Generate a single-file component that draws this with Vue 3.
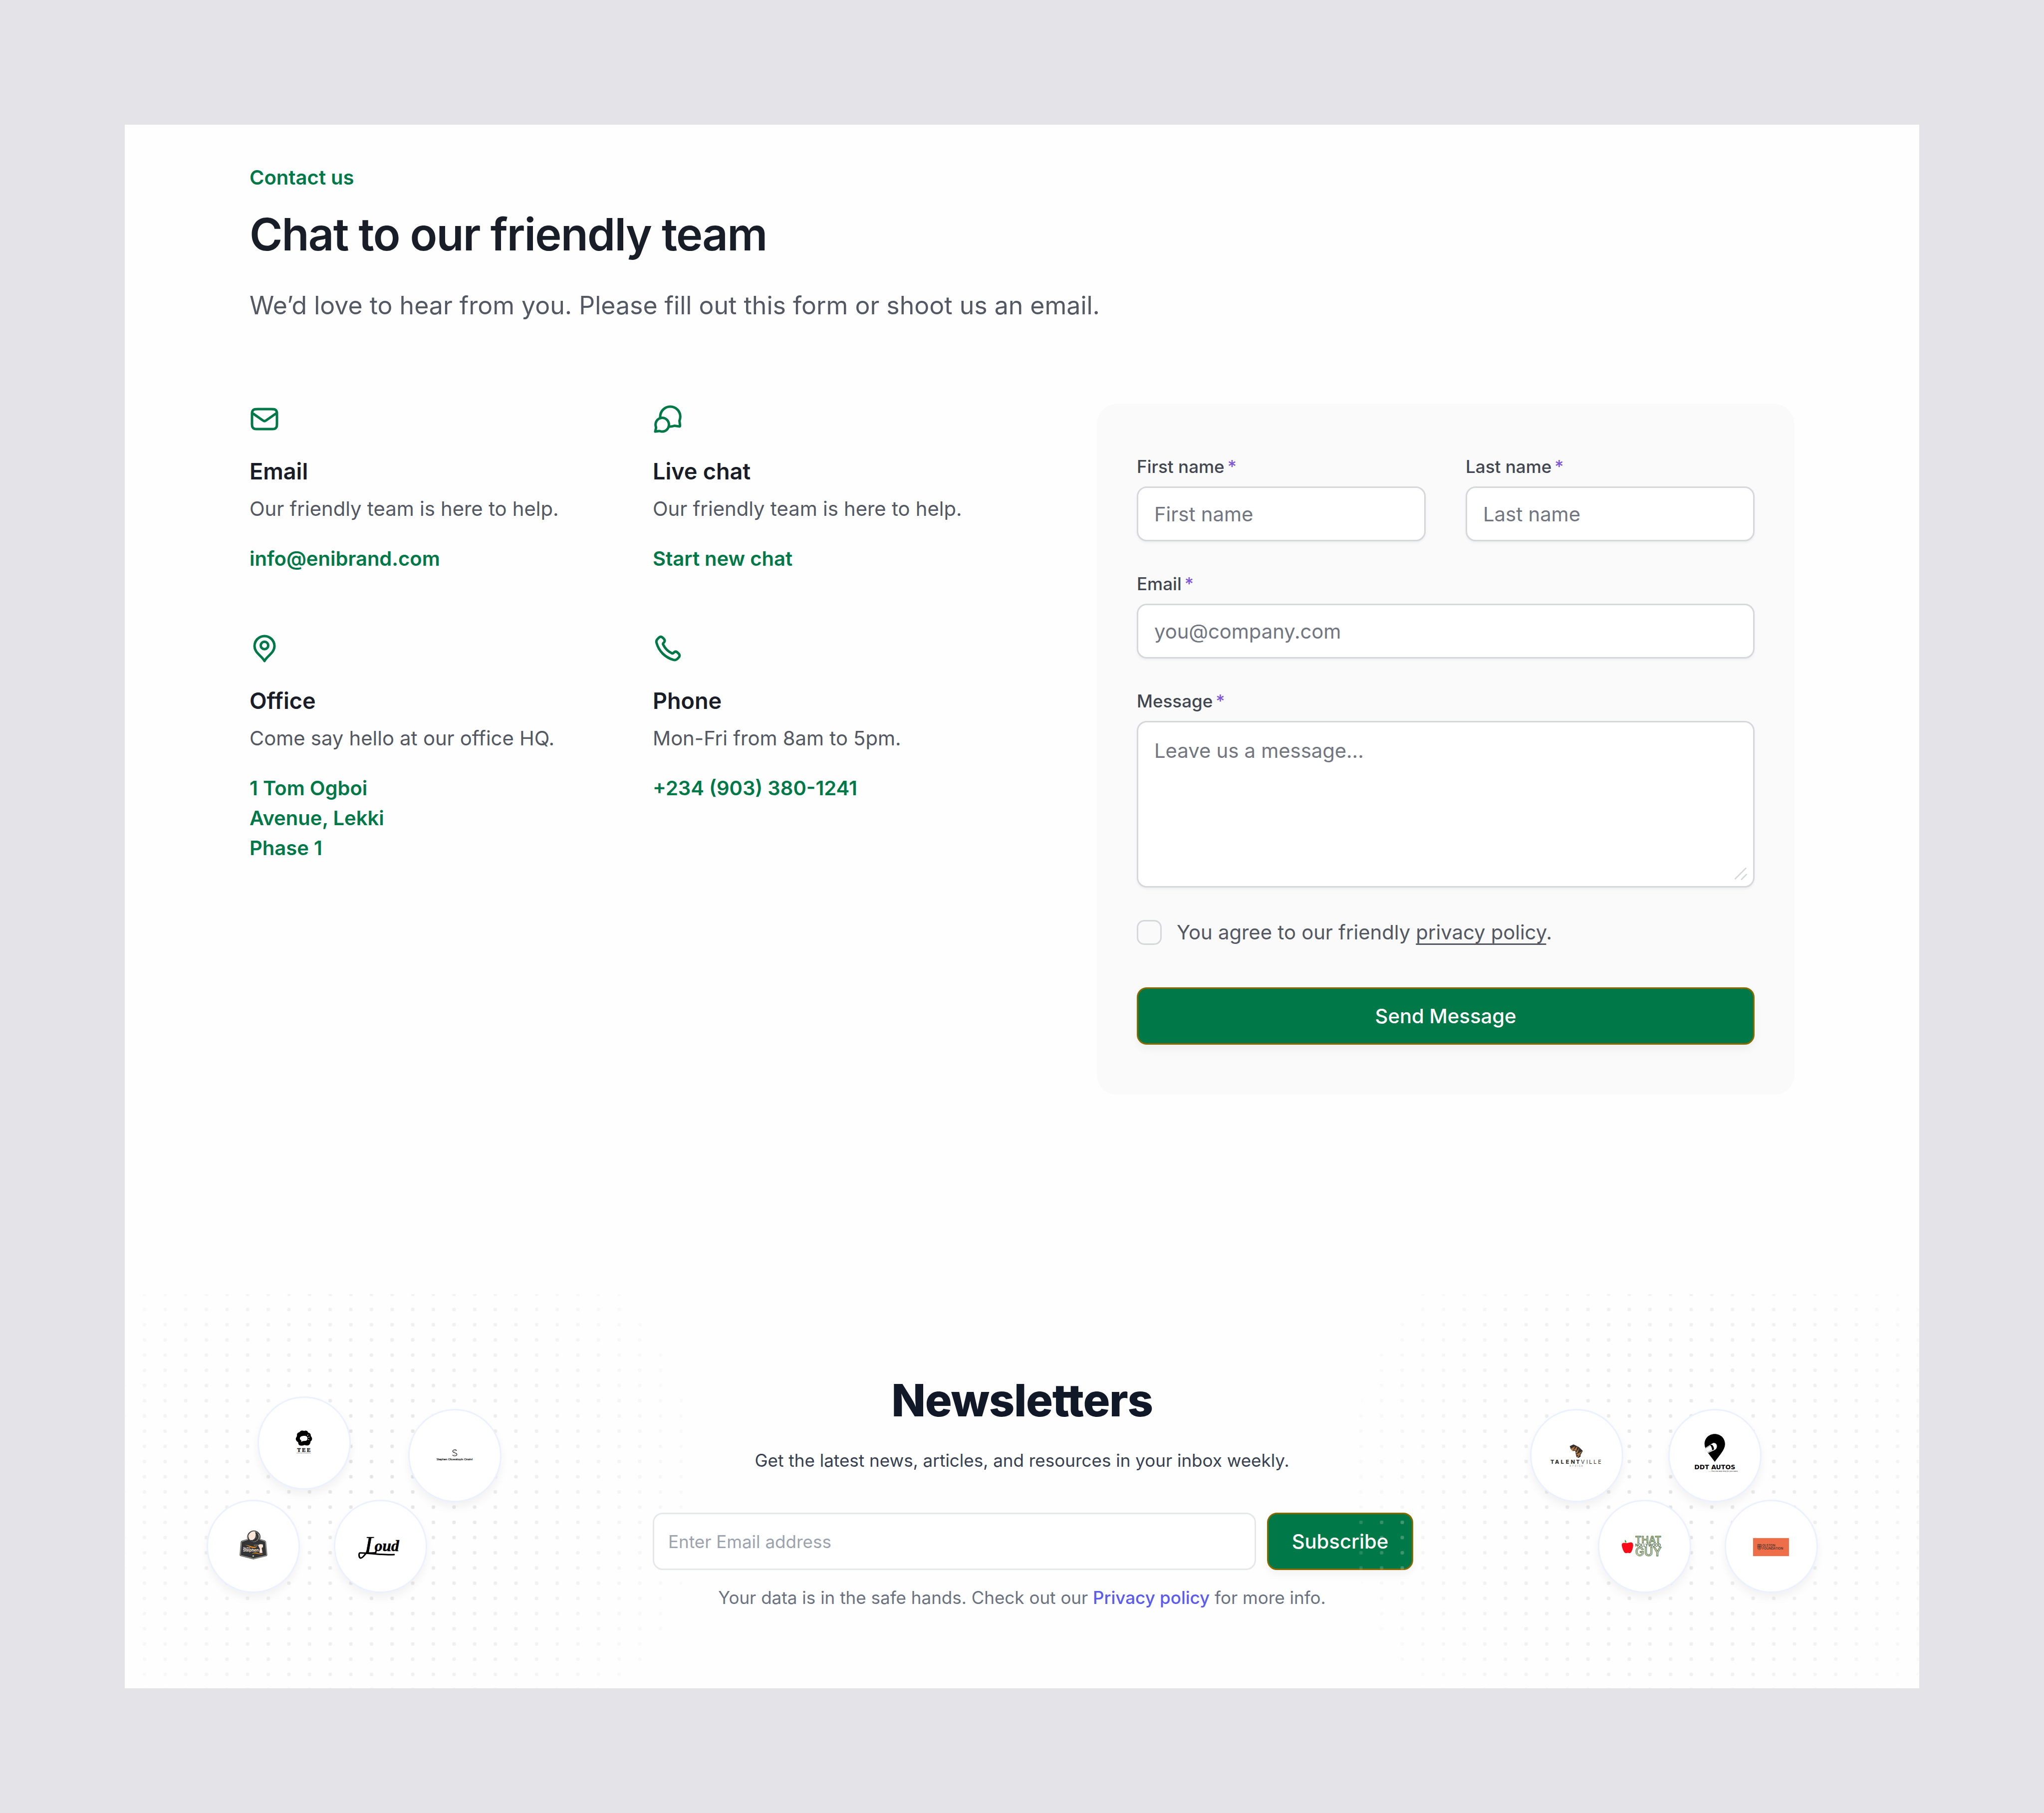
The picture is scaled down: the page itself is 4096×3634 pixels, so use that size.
<script setup>
import { ref } from 'vue'

const channels = [
  {
    icon: 'mail',
    title: 'Email',
    text: 'Our friendly team is here to help.',
    lines: ['info@enibrand.com'],
    href: 'mailto:info@enibrand.com',
  },
  {
    icon: 'chat',
    title: 'Live chat',
    text: 'Our friendly team is here to help.',
    lines: ['Start new chat'],
    href: '#chat',
  },
  {
    icon: 'pin',
    title: 'Office',
    text: 'Come say hello at our office HQ.',
    lines: ['1 Tom Ogboi', 'Avenue, Lekki', 'Phase 1'],
    href: '#office',
  },
  {
    icon: 'phone',
    title: 'Phone',
    text: 'Mon-Fri from 8am to 5pm.',
    lines: ['+234 (903) 380-1241'],
    href: 'tel:+2349033801241',
  },
]

const icons = {
  mail: [
    'M2 7L10.1649 12.7154C10.8261 13.1783 11.1567 13.4097 11.5163 13.4993C11.8339 13.5785 12.1661 13.5785 12.4837 13.4993C12.8433 13.4097 13.1739 13.1783 13.8351 12.7154L22 7M6.8 20H17.2C18.8802 20 19.7202 20 20.362 19.673C20.9265 19.3854 21.3854 18.9265 21.673 18.362C22 17.7202 22 16.8802 22 15.2V8.8C22 7.11984 22 6.27976 21.673 5.63803C21.3854 5.07354 20.9265 4.6146 20.362 4.32698C19.7202 4 18.8802 4 17.2 4H6.8C5.11984 4 4.27976 4 3.63803 4.32698C3.07354 4.6146 2.6146 5.07354 2.32698 5.63803C2 6.27976 2 7.11984 2 8.8V15.2C2 16.8802 2 17.7202 2.32698 18.362C2.6146 18.9265 3.07354 19.3854 3.63803 19.673C4.27976 20 5.11984 20 6.8 20Z',
  ],
  chat: [
    'M6.09436 11.2288C6.03221 10.8282 5.99996 10.4179 5.99996 10C5.99996 5.58172 9.60525 2 14.0526 2C18.4999 2 22.1052 5.58172 22.1052 10C22.1052 10.9981 21.9213 11.9535 21.5852 12.8345C21.5154 13.0175 21.4804 13.109 21.4646 13.1804C21.4489 13.2512 21.4428 13.301 21.4411 13.3735C21.4394 13.4466 21.4493 13.5272 21.4692 13.6883L21.8717 16.9585C21.9153 17.3125 21.9371 17.4895 21.8782 17.6182C21.8266 17.731 21.735 17.8205 21.6211 17.8695C21.4911 17.9254 21.3146 17.8995 20.9617 17.8478L17.7765 17.3809C17.6101 17.3565 17.527 17.3443 17.4512 17.3448C17.3763 17.3452 17.3245 17.3507 17.2511 17.3661C17.177 17.3817 17.0823 17.4172 16.893 17.4881C16.0097 17.819 15.0524 18 14.0526 18C13.6344 18 13.2237 17.9683 12.8227 17.9073',
    'M7.63158 22C10.5965 22 13 19.5376 13 16.5C13 13.4624 10.5965 11 7.63158 11C4.66668 11 2.26316 13.4624 2.26316 16.5C2.26316 17.1106 2.36028 17.6979 2.53955 18.2467C2.61533 18.4787 2.65322 18.5947 2.66566 18.6739C2.67864 18.7567 2.68091 18.8031 2.67608 18.8867C2.67145 18.9668 2.65141 19.0573 2.61134 19.2383L2 22L4.9948 21.591C5.15827 21.5687 5.24 21.5575 5.31137 21.558C5.38652 21.5585 5.42641 21.5626 5.50011 21.5773C5.5701 21.5912 5.67416 21.6279 5.88227 21.7014C6.43059 21.8949 7.01911 22 7.63158 22Z',
  ],
  pin: [
    'M12 12.5C13.6569 12.5 15 11.1569 15 9.5C15 7.84315 13.6569 6.5 12 6.5C10.3431 6.5 9 7.84315 9 9.5C9 11.1569 10.3431 12.5 12 12.5Z',
    'M12 22C14 18 20 15.4183 20 10C20 5.58172 16.4183 2 12 2C7.58172 2 4 5.58172 4 10C4 15.4183 10 18 12 22Z',
  ],
  phone: [
    'M8.38028 8.85335C9.07627 10.303 10.0251 11.6616 11.2266 12.8632C12.4282 14.0648 13.7869 15.0136 15.2365 15.7096C15.3612 15.7694 15.4235 15.7994 15.5024 15.8224C15.7828 15.9041 16.127 15.8454 16.3644 15.6754C16.4313 15.6275 16.4884 15.5704 16.6027 15.4561C16.9523 15.1064 17.1271 14.9316 17.3029 14.8174C17.9658 14.3864 18.8204 14.3864 19.4833 14.8174C19.6591 14.9316 19.8339 15.1064 20.1835 15.4561L20.3783 15.6509C20.9098 16.1824 21.1755 16.4481 21.3198 16.7335C21.6069 17.301 21.6069 17.9713 21.3198 18.5389C21.1755 18.8242 20.9098 19.09 20.3783 19.6214L20.2207 19.779C19.6911 20.3087 19.4263 20.5735 19.0662 20.7757C18.6667 21.0001 18.0462 21.1615 17.588 21.1601C17.1751 21.1589 16.8928 21.0788 16.3284 20.9186C13.295 20.0576 10.4326 18.4332 8.04466 16.0452C5.65668 13.6572 4.03221 10.7948 3.17124 7.76144C3.01103 7.19699 2.93092 6.91477 2.9297 6.50182C2.92833 6.0436 3.08969 5.42311 3.31411 5.0236C3.51636 4.66357 3.78117 4.39876 4.3108 3.86913L4.46843 3.7115C4.99987 3.18006 5.2656 2.91433 5.55098 2.76999C6.11854 2.48292 6.7888 2.48292 7.35636 2.76999C7.64174 2.91433 7.90747 3.18006 8.43891 3.7115L8.63378 3.90637C8.98338 4.25597 9.15819 4.43078 9.27247 4.60655C9.70347 5.26945 9.70347 6.12403 9.27247 6.78692C9.15819 6.96269 8.98338 7.1375 8.63378 7.4871C8.51947 7.60142 8.46231 7.65857 8.41447 7.72538C8.24446 7.96281 8.18576 8.30707 8.26748 8.58743C8.29048 8.66632 8.32041 8.72866 8.38028 8.85335Z',
  ],
}

/* Dotted backdrops: phase of the dot grid and centre of the fade. */
const dotFields = [
  { side: 'left', gridX: -9.2, centre: 206 },
  { side: 'right', gridX: 1.7, centre: 252 },
]

const form = ref({ first: '', last: '', email: '', message: '', agree: false })
const subscriber = ref('')
</script>

<template>
  <div class="page">
    <main class="panel">
      <section class="contact">
        <header class="intro">
          <p class="eyebrow">Contact us</p>
          <h1>Chat to our friendly team</h1>
          <p class="lead">We’d love to hear from you. Please fill out this form or shoot us an email.</p>
        </header>

        <div class="columns">
          <div class="channels">
            <article v-for="c in channels" :key="c.title" class="channel">
              <svg class="icon" viewBox="0 0 24 24" aria-hidden="true">
                <path v-for="d in icons[c.icon]" :key="d" :d="d" />
              </svg>
              <h2>{{ c.title }}</h2>
              <p>{{ c.text }}</p>
              <a :href="c.href"><span v-for="l in c.lines" :key="l">{{ l }}</span></a>
            </article>
          </div>

          <form class="card" @submit.prevent>
            <div class="fields">
              <div class="pair">
                <div class="field">
                  <label for="first">First name<span class="req">*</span></label>
                  <input id="first" v-model="form.first" type="text" placeholder="First name" />
                </div>
                <div class="field">
                  <label for="last">Last name<span class="req">*</span></label>
                  <input id="last" v-model="form.last" type="text" placeholder="Last name" />
                </div>
              </div>
              <div class="field">
                <label for="email">Email<span class="req">*</span></label>
                <input id="email" v-model="form.email" type="email" placeholder="you@company.com" />
              </div>
              <div class="field">
                <label for="message">Message<span class="req">*</span></label>
                <div class="area">
                  <textarea id="message" v-model="form.message" placeholder="Leave us a message..."></textarea>
                  <svg class="grip" viewBox="0 0 10 10" aria-hidden="true"><path d="M.5 9L9 .5M5.5 9.500L9.500 5.500" /></svg>
                </div>
              </div>
              <div class="agree">
                <input id="agree" v-model="form.agree" type="checkbox" />
                <label for="agree">You agree to our friendly <a href="#privacy">privacy policy</a>.</label>
              </div>
            </div>
            <button class="btn" type="submit">Send Message</button>
          </form>
        </div>
      </section>

      <section class="news">
        <svg
          v-for="f in dotFields"
          :key="f.side"
          class="dots"
          :class="f.side"
          viewBox="0 0 458 316.5"
          aria-hidden="true"
        >
          <defs>
            <pattern :id="'grid-' + f.side" :x="f.gridX" y="-6" width="16.57" height="12.21" patternUnits="userSpaceOnUse">
              <rect x="6.900" y="4.750" width="2.750" height="2.750" rx=".9" fill="#e3e3e3" />
            </pattern>
            <radialGradient :id="'fade-' + f.side" gradientUnits="userSpaceOnUse" :cx="f.centre" cy="158.500" r="252.500">
              <stop offset="0" stop-color="#fff" />
              <stop offset="1" stop-color="#fff" stop-opacity=".15" />
            </radialGradient>
            <mask :id="'mask-' + f.side" maskUnits="userSpaceOnUse" x="0" y="0" width="458" height="317">
              <circle :cx="f.centre" cy="158.500" r="252.500" :fill="'url(#fade-' + f.side + ')'" />
            </mask>
          </defs>
          <rect width="458" height="317" :fill="'url(#grid-' + f.side + ')'" :mask="'url(#mask-' + f.side + ')'" />
        </svg>

        <div class="cluster cluster-left">
          <div class="row row-top">
            <svg class="logo" viewBox="0 0 300 300" role="img" aria-label="Tee">
              <path d="M137 111C141 107 148 109 150 110C155 107 162 109 163 115C170 116 173 121 172 127C178 132 178 141 171 145C171 152 167 158 160 158C154 158 153 156 149 157C145 159 138 159 134 157C130 154 131 150 130 147C123 144 120 136 124 131C125 128 127 127 126 123C126 117 131 115 134 114Z" />
              <path fill="#fff" d="M148 126C158 125 161 129 161 134C161 141 158 143 151 143C146 143 145 143 140 147C141 144 141 143 140 141C133 137 134 127 148 126Z" />
              <path stroke="#fff" stroke-width="1.800" stroke-linecap="round" d="M161.500 125L162.700 122.500M164 131.200L167.500 130M163.500 137.500L166 139" />
              <text class="serif" y="178.300" font-size="18" font-weight="700" stroke="#000" stroke-width=".5" x="127 143 159">TEE</text>
              <text class="serif" y="184" font-size="3.800" font-weight="700" x="124.500">THE USER'S EXPERIENCE</text>
            </svg>
            <svg class="logo low" viewBox="0 0 300 300" role="img" aria-label="Stephen Oluwatoyin Onaivi">
              <path fill="none" stroke="#111" stroke-width="1.800" d="M156 134C153 129 143 130 143 136C144 142 156 140 157 146C157 152 146 153 142 148" />
              <path fill="none" stroke="#777" stroke-width="1" d="M153 135C149 133 146 136 148 138.500C151 141 154 142 153 146C151 149 147 148 146 146" />
              <text class="lato" x="149" y="166" font-size="10" stroke="#000" stroke-width=".3" text-anchor="middle">Stephen Oluwatoyin Onaivi</text>
            </svg>
          </div>
          <div class="row row-bottom">
            <svg class="logo" viewBox="0 0 300 300" role="img" aria-label="Play with Stephen">
              <path fill="#333436" stroke="#333436" stroke-width="1" d="M112 132L131 126.500A22 22 0 1 1 173 126.500L188 131Q191 132 192 136L196 178Q196 181 194 182L150.500 192.500L107 181.500Q105 180 105.500 177L109 136Q109.500 133 112 132Z" />
              <path fill="none" stroke="#fbe6d8" stroke-width="1.300" d="M113 134L132 127.700A20.500 20.500 0 1 1 172 127.700L187.500 133Q190 133.500 190.500 137L194.300 178Q194.300 180 193 180.600L150.500 190.600L108.600 180Q107 179 107.400 177L111 137Q111.200 135 113 134Z" />
              <circle cx="152" cy="117.500" r="17.500" fill="#fbe6d8" />
              <path fill="#333436" d="M156 101A17 17 0 1 1 138 128C148 133 163 124 156 101Z" />
              <g fill="#fbe6d8">
                <circle cx="158" cy="112" r="1" /><circle cx="159" cy="117" r="1" /><circle cx="157" cy="122" r="1" />
                <circle cx="153" cy="126" r="1" /><circle cx="148" cy="129" r="1" /><circle cx="161.500" cy="121" r=".8" />
              </g>
              <path fill="#f0921e" d="M121 145.500C134 145 141 151 152 151.500C158 151.500 161 150 164 149C160 154 154 156 149 155.500C138 154 135 147 121 145.500ZM145 175.500C152 168 160 170 166 172.500C172 175 177 175 183 176C173 177.500 167 175 160 173.600C154 173 149 173 145 175.500Z" />
              <path fill="none" stroke="#fbe6d8" stroke-width="1" d="M153 147.500V146H169" />
              <path fill="#fbe6d8" d="M168 145C171 142 180 143 182 144.500L182.500 152L178 156L180 167L180.500 172H171L170.500 166L172 158L166.500 148Z" />
              <text class="sans" fill="#fbe6d8" x="117" y="157" font-size="5" font-weight="700">Play With</text>
              <text class="sans" fill="#fbe6d8" x="115.500" y="167.300" font-size="13" font-weight="700">Stephen</text>
              <path fill="#fbe6d8" d="M149.800 178.500L150.800 181H153.300L151.300 182.600L152 185.300L149.800 183.700L147.600 185.300L148.300 182.600L146.300 181H148.800Z" />
            </svg>
            <svg class="logo" viewBox="0 0 300 300" role="img" aria-label="Loud">
              <text class="serif" x="96" y="174" font-size="84" font-style="italic" stroke="#000">L<tspan dx="-12" dy="-8" font-size="52" font-weight="700">oud</tspan></text>
              <path fill="none" stroke="#000" stroke-width="5" stroke-linecap="round" stroke-linejoin="round" d="M106 166C98 180 88 190 83 189C78 186 77 173 82 172C98 171 160 180 195 177.500" />
            </svg>
          </div>
        </div>

        <div class="signup">
          <h2>Newsletters</h2>
          <p class="pitch">Get the latest news, articles, and resources in your inbox weekly.</p>
          <form class="subscribe" @submit.prevent>
            <input v-model="subscriber" type="email" aria-label="Email address" placeholder="Enter Email address" />
            <button class="btn" type="submit">Subscribe</button>
          </form>
          <p class="note">Your data is in the safe hands. Check out our <a href="#privacy">Privacy policy</a> for more info.</p>
        </div>

        <div class="cluster cluster-right">
          <div class="row row-top">
            <svg class="logo low" viewBox="0 0 300 300" role="img" aria-label="Talentville Africa">
              <path fill="#33302e" d="M127 119L139.400 113L154.400 120L159.400 123.300L170.600 134.700L162 149.400L164.400 151.500L157 158L149.400 154.500L147 145L145.700 134.700L137 134.700L130.600 129Z" />
              <path fill="#b97b42" d="M130 128L137 136L145 119ZM140 132L149 134L153 118ZM145.500 143L152 142L160 123ZM147 147.500L156 149L170 134.700ZM149 155L156 154L164 143Z" />
              <text class="sans" fill="#33302e" y="177.200" font-size="18" font-weight="800" x="63 78 97.500 114 130.500 148">TALENT</text>
              <text class="sans" fill="#33302e" y="177.200" font-size="18" font-weight="400" x="164 182.500 191 206 221">VILLE</text>
              <text class="sans" fill="#77736f" y="187" font-size="7" x="126.500 136.500 144 152.500 157.500 165.500">AFRICA</text>
            </svg>
            <svg class="logo low" viewBox="0 0 300 300" role="img" aria-label="DDT Autos">
              <path d="M149.600 78.300C169 78.300 183.700 93 183.700 112C183.700 132 164 150 149.600 171C135 150 115.600 132 115.600 112C115.600 93 130 78.300 149.600 78.300Z" />
              <path fill="#fff" d="M117 125L135 114L143 109C152 106 158 113 156.500 122C155 128 152 131 147 132.500L128 141.500L125 138Z" />
              <path d="M134 114.500Q141 113 144 118Q147.500 124 147 130L141 132.500Q140 122 134 114.500Z" />
              <path stroke="#000" stroke-width=".8" d="M118 126.500L136 116M127 139L142 131" />
              <text class="wide" x="149.600" y="196" font-size="21" font-weight="700" text-anchor="middle">DDT AUTOS</text>
              <text class="sans" x="226" y="203.700" font-size="5.500" font-style="italic" text-anchor="end">......Your one stop shop for your autos</text>
            </svg>
          </div>
          <div class="row row-bottom">
            <svg class="logo" viewBox="0 0 300 300" role="img" aria-label="That Nollywood Guy">
              <path fill="#fb0a17" d="M91 139.500C96 139 101 136 107 137C114 139 113 150 110 159C107 169 104 172.500 100 172.500C97 172.500 95 171 93 172C87 174 83 172 80 165C76 156 73 146 75.500 141C79 138 86 138 91 139.500Z" />
              <path fill="#1fb32a" d="M85 128.500C89 131 90 134 89.300 138.500C86 138 83 133 85 128.500Z" />
              <g class="sans" fill="#c3cdb9" stroke="#4a6b34" stroke-width="1.400">
                <text x="119" y="140" font-size="32" font-weight="600">THAT</text>
                <text x="119" y="183" font-size="40" font-weight="600">GUY</text>
              </g>
              <text class="sans" fill="#34502a" x="119" y="150" font-size="13" font-weight="600">NOLLYWOOD</text>
            </svg>
            <svg class="logo" viewBox="0 0 300 300" role="img" aria-label="Olston Foundation">
              <rect x="89.400" y="122.500" width="119.300" height="60" fill="#ef6e4a" />
              <g fill="none" stroke="#2e2b2b" stroke-width="1.200">
                <path d="M104.500 143.500H117V155C117 159 113 161 110.700 161.500C108 161 104.500 159 104.500 155Z" />
                <circle cx="110.700" cy="154.500" r="3.500" /><circle cx="110.700" cy="154.500" r="1.200" />
                <path d="M104.500 150H117M108 144V149M113.500 144V149M110.700 144V150" />
              </g>
              <g class="sans" fill="#2e2b2b" font-size="10.500" font-weight="500">
                <text x="120" y="150.200">OLSTON</text>
                <text x="120" y="161.300">FOUNDATION</text>
              </g>
            </svg>
          </div>
        </div>
      </section>
    </main>
  </div>
</template>

<style>
body {
  margin: 0;
  background: #e4e3e8;
}
</style>

<style scoped>
.page {
  display: flex;
  box-sizing: border-box;
  min-height: 100vh;
  padding: 250px;
  background: #e4e3e8;
  font-family: Inter, "Liberation Sans", sans-serif;
  font-size: 40px;
  line-height: 60px;
  color: #535862;
}

.panel {
  display: flex;
  flex: 1;
  flex-direction: column;
  min-width: 0;
  overflow: hidden;
  background: #fefefe;
}

h1, h2, p { margin: 0; }
a { color: inherit; text-decoration: none; }
input, textarea, button { box-sizing: border-box; font: inherit; }

.contact { padding: 76px 250px 400px; }

.eyebrow {
  font-weight: 600;
  color: #007847;
}

h1 {
  margin-top: 29px;
  font-size: 90px;
  font-weight: 600;
  line-height: 110px;
  letter-spacing: -0.02em;
  color: #181d27;
}

.lead {
  margin-top: 50px;
  font-size: 50px;
  line-height: 75px;
}

.columns {
  display: flex;
  justify-content: space-between;
  align-items: flex-start;
  margin-top: 160px;
}

.channels {
  display: grid;
  grid-template-columns: 650px 650px;
  gap: 120px 158px;
}

.channel { display: flex; flex-direction: column; align-items: flex-start; }

.icon {
  width: 60px;
  height: 60px;
  fill: none;
  stroke: #007847;
  stroke-width: 2;
  stroke-linecap: round;
  stroke-linejoin: round;
}

.channel h2 {
  margin-top: 40px;
  font-size: 45px;
  font-weight: 600;
  line-height: 70px;
  color: #181d27;
}

.channel p { margin-top: 10px; }

.channel a {
  display: flex;
  flex-direction: column;
  margin-top: 40px;
  font-weight: 600;
  color: #007847;
}

.card {
  box-sizing: border-box;
  flex: 0 0 1398px;
  padding: 100px 80px;
  border-radius: 40px;
  background: #fafafa;
}

.fields { display: flex; flex-direction: column; gap: 60px; }
.pair { display: grid; grid-template-columns: 1fr 1fr; gap: 80px; }
.field { display: flex; flex-direction: column; gap: 15px; min-width: 0; }

.field label {
  font-size: 35px;
  font-weight: 500;
  line-height: 50px;
  color: #414651;
}

.req { margin-left: 6px; color: #7f56d9; }

.field input,
.field textarea {
  display: block;
  width: 100%;
  border: 3px solid #d5d7da;
  border-radius: 20px;
  background: #fff;
  box-shadow: 0 3px 5px rgba(10, 13, 18, 0.05);
  color: #181d27;
}

.field input { height: 110px; padding: 0 32px; }

.area { position: relative; }

.field textarea {
  height: 334px;
  padding: 27px 32px;
  resize: none;
}

.field input::placeholder,
.field textarea::placeholder { color: #717680; opacity: 1; }

.grip {
  position: absolute;
  right: 15px;
  bottom: 15px;
  width: 25px;
  height: 25px;
  fill: none;
  stroke: #d5d7da;
  stroke-linecap: round;
}

.agree { display: flex; gap: 30px; }

.agree input {
  flex: none;
  width: 50px;
  height: 50px;
  margin: 5px 0 0;
  border: 3px solid #d5d7da;
  border-radius: 15px;
  appearance: none;
}

.agree a {
  text-decoration: underline;
  text-decoration-thickness: 3px;
  text-decoration-skip-ink: none;
  text-underline-offset: 8px;
}

.btn {
  height: 115px;
  padding: 0;
  border: 3px solid #866a00;
  border-radius: 20px;
  background: #007847;
  box-shadow: 0 10px 15px rgba(10, 13, 18, 0.04);
  font-weight: 500;
  color: #fff;
}

.card .btn { width: 100%; margin-top: 80px; }

.news {
  position: relative;
  display: grid;
  flex: 1;
  grid-template-columns: 1fr 1480px 1fr;
  align-items: start;
  overflow: hidden;
}

.dots {
  position: absolute;
  top: 0;
  width: 1144px;
  height: 790px;
  pointer-events: none;
}

.dots.left { left: 0; }
.dots.right { right: 0; z-index: 1; }

.cluster {
  position: relative;
  z-index: 2;
  padding-top: 205px;
}

.cluster-left { padding-left: 164px; }
.cluster-right { justify-self: end; padding-right: 203px; }
.row { display: flex; }
.row-top { height: 212px; }
.row-bottom { margin-top: -5px; }
.cluster-left .row-top { gap: 115px; padding-left: 102px; }
.cluster-left .row-bottom { gap: 68px; }
.cluster-right .row-top { gap: 90px; }
.cluster-right .row-bottom { gap: 67px; padding-left: 136px; }

.logo {
  box-sizing: border-box;
  flex: none;
  width: 187px;
  height: 187px;
  border: 3px solid #ecf1ff;
  border-radius: 50%;
  background: #fff;
  box-shadow: 0 10px 18px rgba(0, 0, 0, 0.05);
}

.logo.low { align-self: flex-end; }
.serif { font-family: "Liberation Serif", serif; }
.sans { font-family: Inter, sans-serif; }
.lato { font-family: Lato, sans-serif; }
.wide { font-family: "DejaVu Sans", sans-serif; }

.signup {
  position: relative;
  padding-top: 163px;
  text-align: center;
}

.signup h2 {
  font-size: 90px;
  font-weight: 800;
  line-height: 100px;
  letter-spacing: -0.015em;
  color: #111827;
}

.pitch {
  margin-top: 40px;
  font-size: 35px;
  color: #374151;
}

/* The row runs a little past the column on its right side. */
.subscribe {
  display: flex;
  gap: 22px;
  margin: 75px -44px 0 0;
}

.subscribe input {
  flex: 1;
  min-width: 0;
  height: 115px;
  padding: 0 28px;
  border: 3px solid #e5e7eb;
  border-radius: 20px;
  background: #fff;
  font-size: 35px;
  color: #111827;
}

.subscribe input::placeholder { color: #9ca3af; opacity: 1; }
.subscribe .btn { width: 293px; }

.note {
  margin-top: 30px;
  font-size: 35px;
  line-height: 50px;
  color: #6b7280;
}

.note a { font-weight: 500; color: #5b5bf0; }
</style>
